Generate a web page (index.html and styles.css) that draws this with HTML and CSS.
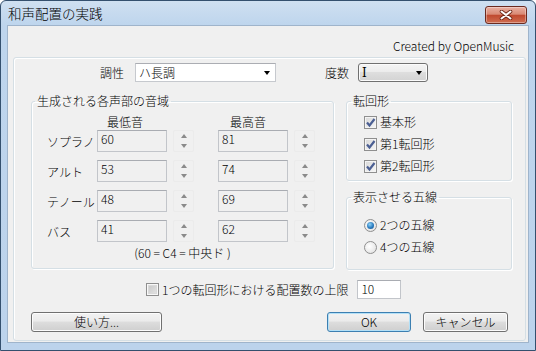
FILE: index.html
```html
<!DOCTYPE html>
<html lang="ja">
<head>
<meta charset="utf-8">
<link rel="stylesheet" href="styles.css">
</head>
<body>
<div class="window">
  <div class="titlebar">
    <span class="title">和声配置の実践</span>
    <div class="close">
      <svg width="14" height="10" viewBox="0 0 14 10"><path d="M2.5 1.5 L11.5 8.5 M11.5 1.5 L2.5 8.5" stroke="#6a2414" stroke-width="3.6" stroke-linecap="round"/><path d="M2.5 1.5 L11.5 8.5 M11.5 1.5 L2.5 8.5" stroke="#ffffff" stroke-width="2" stroke-linecap="round"/></svg>
    </div>
  </div>
  <div class="client">
    <div class="credit">Created by OpenMusic</div>
    <div class="panel">
      <div class="toprow">
        <span class="lbl">調性</span>
        <div class="combo combo-white"><span>ハ長調</span><span class="arrow"></span></div>
        <span class="lbl lbl-deg">度数</span>
        <div class="combo combo-btn"><span class="roman">Ⅰ</span><span class="arrow"></span></div>
      </div>
      <div class="mid">
        <fieldset class="grp range">
          <legend>生成される各声部の音域</legend>
          <div class="range-in">
            <div class="heads"><span class="h1">最低音</span><span class="h2">最高音</span></div>
            <div class="vrow first"><span class="vname">ソプラノ</span><div class="field">60</div><div class="spin"><span class="up"></span><span class="down"></span></div><div class="field f2">81</div><div class="spin"><span class="up"></span><span class="down"></span></div></div>
            <div class="vrow"><span class="vname">アルト</span><div class="field">53</div><div class="spin"><span class="up"></span><span class="down"></span></div><div class="field f2">74</div><div class="spin"><span class="up"></span><span class="down"></span></div></div>
            <div class="vrow"><span class="vname">テノール</span><div class="field">48</div><div class="spin"><span class="up"></span><span class="down"></span></div><div class="field f2">69</div><div class="spin"><span class="up"></span><span class="down"></span></div></div>
            <div class="vrow"><span class="vname">バス</span><div class="field">41</div><div class="spin"><span class="up"></span><span class="down"></span></div><div class="field f2">62</div><div class="spin"><span class="up"></span><span class="down"></span></div></div>
            <div class="note">(60 = C4 = 中央ド )</div>
          </div>
        </fieldset>
        <div class="side">
          <fieldset class="grp inv">
            <legend>転回形</legend>
            <div class="inv-in">
              <div class="opt"><span class="cb checked"><svg width="11" height="11" viewBox="0 0 11 11"><path d="M2 5.5 L4.5 8.5 L9.5 2" fill="none" stroke="#4b5f93" stroke-width="2.2"/></svg></span><span>基本形</span></div>
              <div class="opt"><span class="cb checked"><svg width="11" height="11" viewBox="0 0 11 11"><path d="M2 5.5 L4.5 8.5 L9.5 2" fill="none" stroke="#4b5f93" stroke-width="2.2"/></svg></span><span>第1転回形</span></div>
              <div class="opt"><span class="cb checked"><svg width="11" height="11" viewBox="0 0 11 11"><path d="M2 5.5 L4.5 8.5 L9.5 2" fill="none" stroke="#4b5f93" stroke-width="2.2"/></svg></span><span>第2転回形</span></div>
            </div>
          </fieldset>
          <fieldset class="grp staff">
            <legend>表示させる五線</legend>
            <div class="staff-in">
              <div class="opt"><span class="rb on"><span class="dot"></span></span><span>2つの五線</span></div>
              <div class="opt"><span class="rb"></span><span>4つの五線</span></div>
            </div>
          </fieldset>
        </div>
      </div>
      <div class="limit">
        <span class="cb empty"></span>
        <span class="limit-lbl">1つの転回形における配置数の上限</span>
        <div class="field white">10</div>
      </div>
      <div class="buttons">
        <div class="btn help">使い方...</div>
        <div class="right-btns">
          <div class="btn ok">OK</div>
          <div class="btn cancel">キャンセル</div>
        </div>
      </div>
    </div>
  </div>
</div>
</body>
</html>
```
FILE: styles.css
```css
* { box-sizing: border-box; }
html, body { margin: 0; padding: 0; }
body {
  width: 536px; height: 351px; overflow: hidden; background: #ffffff;
  font-family: "Noto Sans CJK JP", "Noto Sans", sans-serif;
  font-size: 12px; font-weight: 300; color: #000;
}
.window {
  width: 536px; height: 351px;
  border: 1px solid #34506e; border-radius: 6px 6px 0 0;
  background: linear-gradient(#cfe0f1, #bed5ed 24px, #bcd3ec);
  display: flex; flex-direction: column;
}
.titlebar {
  height: 24px; flex: none;
  display: flex; align-items: center; justify-content: space-between;
  padding: 0 8px 0 7px;
}
.title { font-size: 13.5px; line-height: 16px; }
.close {
  width: 42px; height: 18px; margin-top: 3px;
  border: 1px solid #6b2a1f; border-radius: 3px;
  background: linear-gradient(#eab0a2, #d98a75 45%, #c04a30 52%, #cf6d50);
  box-shadow: inset 0 0 0 1px rgba(255,255,255,0.35);
  display: flex; align-items: center; justify-content: center;
}
.client {
  flex: 1; margin: 0 6px 7px;
  border: 1px solid #9fb4cb; background: #f0f0f0;
  display: flex; flex-direction: column;
}
.credit {
  padding: 12px 14px 0 0; line-height: 16px; text-align: right;
}
.panel {
  flex: 1; margin: 3px 2px 1px 5px;
  border: 1px solid #d5dfe5; border-radius: 3px;
  box-shadow: inset 1px 1px 0 #ffffff;
  display: flex; flex-direction: column;
}
.toprow {
  display: flex; align-items: center;
  margin-top: 5px; padding-left: 86px; height: 19px;
}
.lbl { line-height: 16px; }
.combo {
  height: 19px; margin-left: 11px;
  display: flex; align-items: center; justify-content: space-between;
  padding: 0 5px 0 3px; line-height: 16px;
}
.combo-white {
  width: 141px; background: #ffffff;
  border: 1px solid #c6c9ce; border-top-color: #abadb3;
}
.lbl-deg { margin-left: 49px; }
.combo-btn {
  width: 70px; margin-left: 9px;
  border: 1px solid #707070; border-radius: 3px;
  background: linear-gradient(#f4f4f4, #ececec 45%, #dedede 50%, #d3d3d3);
  box-shadow: inset 0 0 0 1px #fbfbfb;
}
.roman { font-family: "DejaVu Serif", serif; font-size: 12px; font-weight: 400; }
.arrow {
  width: 0; height: 0;
  border-left: 3.5px solid transparent; border-right: 3.5px solid transparent;
  border-top: 4px solid #000;
}
.mid {
  display: flex; align-items: flex-start; gap: 12px;
  margin-top: 11px; padding-left: 17px;
}
.grp {
  margin: 0; padding: 0; min-width: 0;
  border: 1px solid #d5dfe5; border-radius: 3px;
  box-shadow: inset 1px 1px 0 #ffffff, 1px 1px 0 #ffffff;
}
.grp legend { padding: 0 2px; margin-left: 4px; line-height: 16px; }
.range { width: 303px; }
.range legend { margin-left: 3px; }
.range-in { padding: 6px 0 8px 15px; }
.heads { height: 14px; line-height: 14px; display: flex; }
.h1 { margin-left: 60px; }
.h2 { margin-left: 87px; }
.vrow { display: flex; align-items: center; height: 22px; margin-top: 8px; }
.vrow.first { margin-top: 1px; }
.vname { width: 50px; line-height: 16px; padding-top: 1px; }
.field {
  width: 70px; height: 22px; padding: 0 3px; line-height: 16px;
  background: #f0f0f0;
  border: 1px solid #c2c5ca; border-top-color: #a9acb2;
  align-self: flex-start;
}
.f2 { margin-left: 24px; }
.spin {
  width: 21px; height: 22px; margin-left: 6px;
  border: 1px solid #ebebeb; border-radius: 2px;
  display: flex; flex-direction: column; align-items: center;
  justify-content: space-between; padding: 3px 0 3px;
}
.up, .down { width: 0; height: 0; border-left: 3px solid transparent; border-right: 3px solid transparent; }
.up { border-bottom: 4px solid #8a8a8a; }
.down { border-top: 4px solid #8a8a8a; }
.note { margin: 4px 0 0 -15px; line-height: 14px; text-align: center; }
.side { width: 166px; display: flex; flex-direction: column; }
.inv-in { padding: 2px 0 3px 17px; }
.staff { margin-top: 8px; }
.staff-in { padding: 9px 0 11px 17px; }
.opt { height: 22px; display: flex; align-items: center; gap: 3px; line-height: 16px; }
.cb {
  width: 13px; height: 13px; flex: none;
  border: 1px solid #8f8f8f;
  background: linear-gradient(135deg, #d8d8d8, #f6f6f6);
  box-shadow: inset 0 0 0 1px #f4f4f4;
  display: flex; align-items: center; justify-content: center;
}
.cb svg { display: block; }
.cb.empty {
  background: linear-gradient(135deg, #c4c4c4, #e8e8e8);
  box-shadow: inset 0 0 0 1px #f8f8f8, inset 0 0 0 2px #dadada;
}
.rb {
  width: 13px; height: 13px; flex: none; border-radius: 50%;
  border: 1px solid #8f8f8f;
  background: radial-gradient(circle at 40% 40%, #ffffff, #dcdcdc);
  display: flex; align-items: center; justify-content: center;
}
.rb .dot {
  width: 7px; height: 7px; border-radius: 50%;
  background: radial-gradient(circle at 40% 35%, #8fd3f7, #2a7bbf 55%, #114f86);
}
.limit {
  display: flex; align-items: center; height: 19px;
  margin-top: 10px; padding-left: 132px;
}
.limit-lbl { margin-left: 3px; line-height: 16px; }
.field.white {
  width: 44px; height: 19px; margin-left: 9px; background: #ffffff;
  align-self: auto;
}
.buttons {
  display: flex; justify-content: space-between;
  margin-top: 13px; padding: 0 17px;
}
.right-btns { display: flex; gap: 12px; }
.btn {
  height: 20px; border: 1px solid #707070; border-radius: 3px;
  background: linear-gradient(#f2f2f2, #ebebeb 45%, #dddddd 50%, #cfcfcf);
  box-shadow: inset 0 0 0 1px #fcfcfc;
  display: flex; align-items: center; justify-content: center;
  line-height: 16px;
}
.help { width: 131px; }
.ok {
  width: 84px; border-color: #3c7fb1;
  box-shadow: inset 0 0 0 1px #b3e0f7;
}
.cancel { width: 85px; }
```
